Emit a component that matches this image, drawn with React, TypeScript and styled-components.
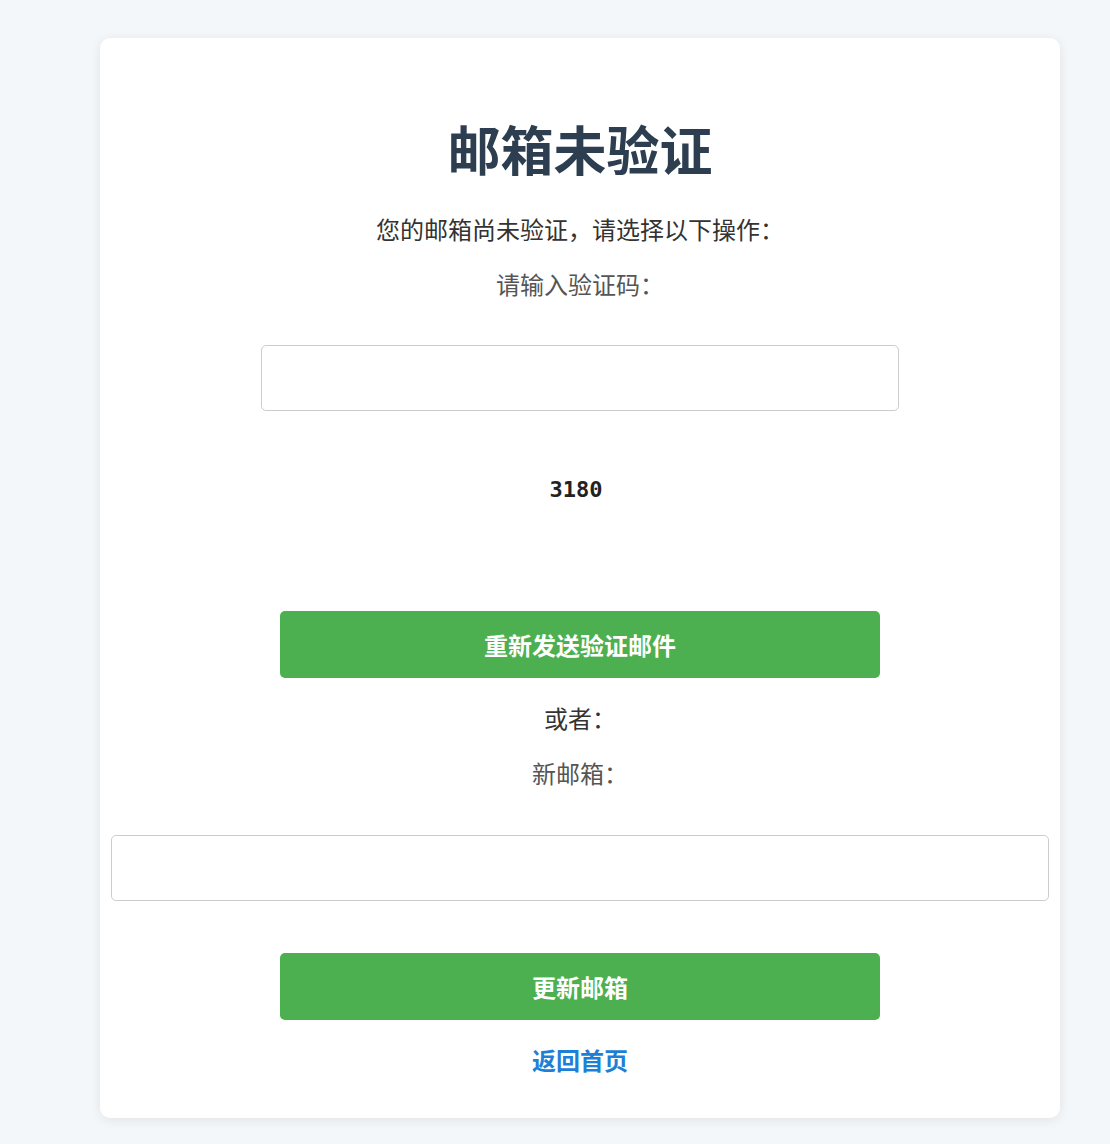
import styled, { createGlobalStyle } from "styled-components";

const GlobalStyle = createGlobalStyle`
  html, body {
    margin: 0;
    padding: 0;
    background-color: #f4f7fa;
    font-family: "Noto Sans CJK SC", "Noto Sans", sans-serif;
  }
`;

const Page = styled.div`
  padding: 38px 0 26px 100px;
`;

const Card = styled.div`
  width: 960px;
  box-sizing: border-box;
  padding: 82px 11px 42px;
  background-color: #fff;
  border-radius: 10px;
  box-shadow: 0 2px 12px rgba(0, 0, 0, 0.08);
  display: flex;
  flex-direction: column;
  align-items: center;
`;

const Title = styled.h1`
  margin: 0;
  font-size: 53px;
  line-height: 56px;
  font-weight: 700;
  color: #2c3e50;
`;

const Text = styled.p<{ $top: number; $muted?: boolean }>`
  margin: ${(p) => p.$top}px 0 0;
  font-size: 24px;
  line-height: 32px;
  color: ${(p) => (p.$muted ? "#555" : "#333")};
`;

const Input = styled.input<{ $width: number; $top: number }>`
  display: block;
  width: ${(p) => p.$width}px;
  height: 66px;
  box-sizing: border-box;
  margin-top: ${(p) => p.$top}px;
  border: 1px solid #ccc;
  border-radius: 5px;
  padding: 0 12px;
  font-size: 24px;
  background: #fff;
`;

const Captcha = styled.div`
  margin: 67px 8px 0 0;
  font-family: "DejaVu Sans Mono", "Liberation Mono", monospace;
  font-weight: 700;
  font-size: 22px;
  line-height: 24px;
  color: #222;
`;

const Button = styled.button<{ $top: number }>`
  width: 600px;
  height: 67px;
  margin-top: ${(p) => p.$top}px;
  border: none;
  border-radius: 5px;
  background-color: #4caf50;
  color: #fff;
  font-family: inherit;
  font-size: 24px;
  font-weight: 700;
  cursor: pointer;
`;

const HomeLink = styled.a`
  margin-top: 24px;
  font-size: 24px;
  line-height: 32px;
  font-weight: 700;
  color: #1e7fd6;
  text-decoration: none;
`;

export default function App() {
  return (
    <>
      <GlobalStyle />
      <Page>
        <Card>
          <Title>邮箱未验证</Title>
          <Text $top={37}>您的邮箱尚未验证，请选择以下操作：</Text>
          <Text $top={23} $muted>请输入验证码：</Text>
          <Input $width={638} $top={45} />
          <Captcha>3180</Captcha>
          <Button $top={109}>重新发送验证邮件</Button>
          <Text $top={24}>或者：</Text>
          <Text $top={23} $muted>新邮箱：</Text>
          <Input $width={938} $top={46} />
          <Button $top={52}>更新邮箱</Button>
          <HomeLink href="#">返回首页</HomeLink>
        </Card>
      </Page>
    </>
  );
}
